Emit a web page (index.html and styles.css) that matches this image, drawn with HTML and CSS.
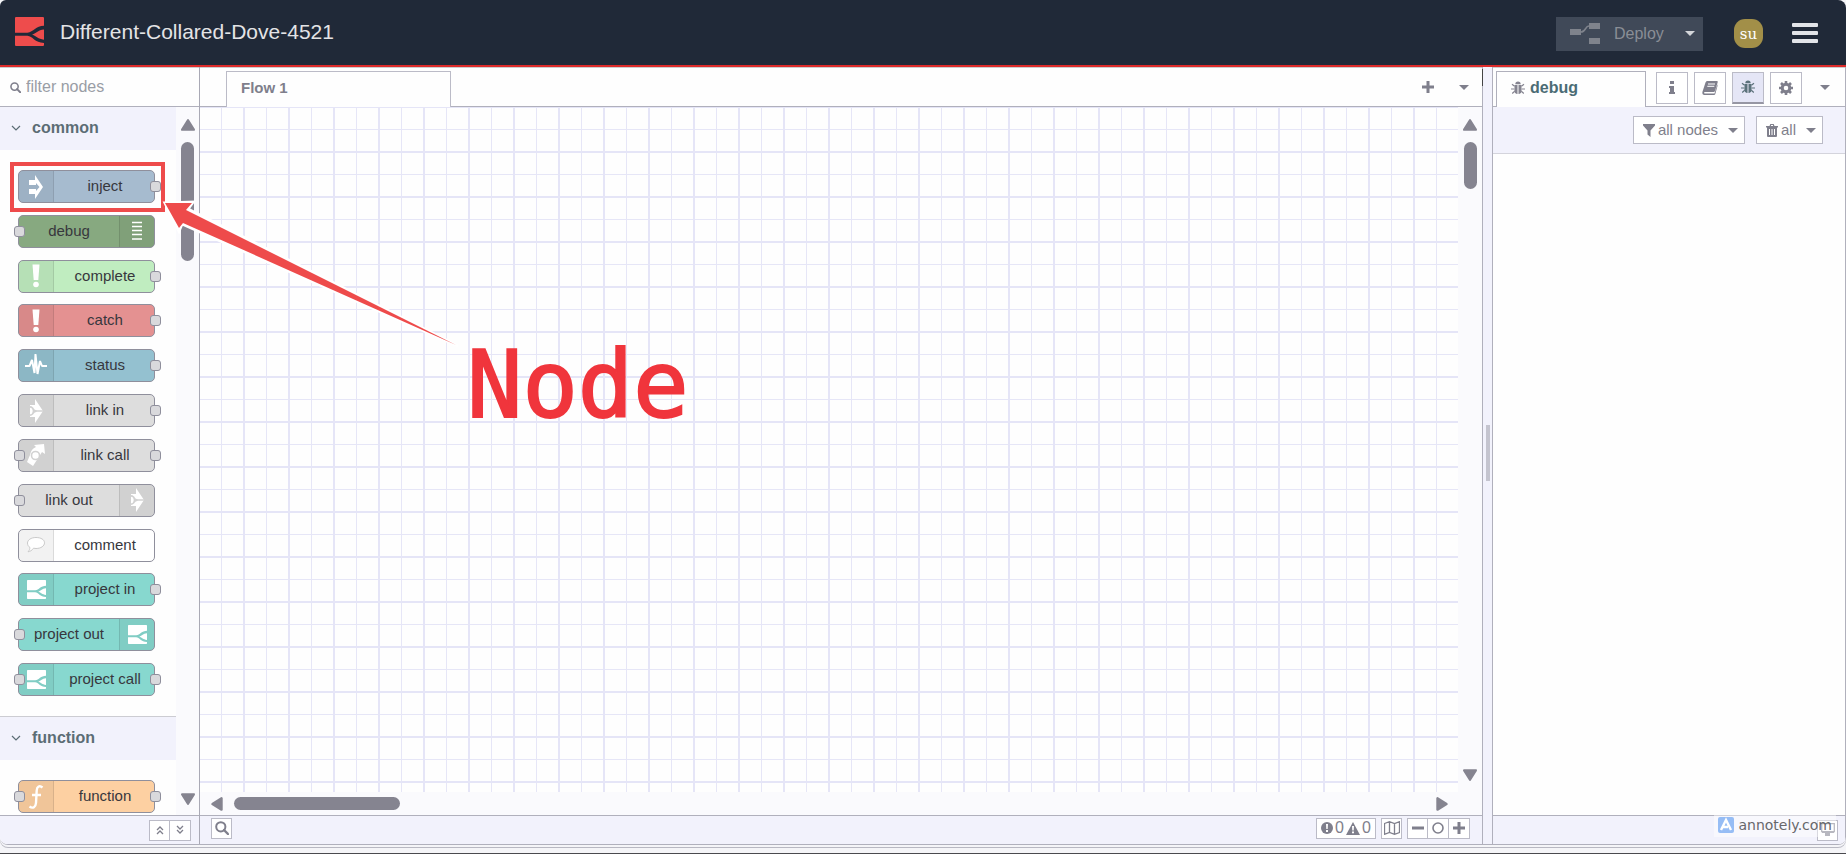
FILE: index.html
```html
<!DOCTYPE html>
<html lang="en">
<head>
<meta charset="utf-8">
<title>Different-Collared-Dove-4521</title>
<link rel="stylesheet" href="styles.css">
</head>
<body>
<svg class="defs" width="0" height="0" aria-hidden="true">
  <symbol id="logo" viewBox="0 0 28 28"><path d="M1 0H27Q28 0 28 1V8.500C20 8.500 18 14.500 12 15.200H0V1Q0 0 1 0ZM0 18.200H12C17 18.500 19 25 28 25V27Q28 28 27 28H1Q0 28 0 27ZM28 12V22C22 21.500 21 18.500 16.500 17C21 15.500 22 12.500 28 12Z"/></symbol>
  <symbol id="bug" viewBox="0 0 14 14"><path d="M4.300 3.200a2.700 2.700 0 0 1 5.400 0zM3.600 4h2.900v9C4.500 13 3.400 11.500 3.400 9.500zM7.500 4h2.900l.2 5.500c0 2-1.100 3.500-3.100 3.500z"/><path d="M1 3.200l2.600 2M0 8h3.300M1.200 12.500l2.500-2.200M13 3.200l-2.600 2M14 8h-3.300M12.800 12.500l-2.500-2.200" fill="none" stroke="currentColor" stroke-width="1.200"/></symbol>
  <symbol id="search" viewBox="0 0 14 14"><circle cx="5.800" cy="5.800" r="4.600" fill="none" stroke="currentColor" stroke-width="2"/><path d="M9 9l4 4" stroke="currentColor" stroke-width="2.400" stroke-linecap="round"/></symbol>
  <symbol id="inject" viewBox="0 0 16 26"><path d="M1 6h6V1L15 13 7 25V20H1v-5h7v2l3.500-4L8 9v2H1z"/></symbol>
  <symbol id="bang" viewBox="0 0 10 26"><path d="M1.500 1.500h7L7.300 17H2.700z"/><circle cx="5" cy="21.500" r="2.800"/></symbol>
  <symbol id="pulse" viewBox="0 0 22 26"><path d="M0 13h4.500l2.500-6 2.500 13L10.500 1l2 20 2.500-13L17 13h5" fill="none" stroke="currentColor" stroke-width="2" stroke-linejoin="bevel"/></symbol>
  <symbol id="link" viewBox="0 0 14 26"><path d="M1 7h5V1l8 12-8 12v-6H1z"/><path d="M0 9q2-.5 3.500 1Q5 13 8 13h6M8 13q-3 0-4.500 3Q2 17.500 0 17M3.500 10q2 3 0 6" fill="none" stroke="#d2d2d2" stroke-width="1.600"/></symbol>
  <symbol id="call" viewBox="0 0 20 24"><path d="M8 2l10-1 1 10-3-2-9 14-6-4 3-7q1-6 6-8z"/><circle cx="9.500" cy="12.500" r="4" fill="currentColor" stroke="#d2d2d2" stroke-width="1.600"/></symbol>
  <symbol id="bubble" viewBox="0 0 20 18"><path d="M10 1.500c5 0 8.500 2.200 8.500 5.300s-3.500 5.700-8.500 5.700l-2.500-.3C6 14.500 4 15.500 2 15.800c1.500-1.500 2-3 1.800-4.500C2.300 10.300 1.500 9 1.500 7c0-3 3.500-5.500 8.500-5.500z" fill="#fff" stroke="#cacaca"/></symbol>
  <symbol id="func" viewBox="0 0 16 26"><path d="M14.500 3.500c-3-2.500-5.500-1-5.800 3L8 19c-.3 4-3 6-6.500 3.500M4 11h9" fill="none" stroke="currentColor" stroke-width="2.400"/></symbol>
  <symbol id="list" viewBox="0 0 12 20"><path d="M1 1.500h10M1 5.500h10M1 9.500h10M1 13.500h10M1 18h10" stroke="currentColor" stroke-width="1.500"/></symbol>
</svg>

<header class="header">
  <svg class="logo"><use href="#logo"/></svg>
  <h1 class="title">Different-Collared-Dove-4521</h1>
  <button class="deploy">
    <svg class="deploy-icon" viewBox="0 0 30 22"><path d="M0 6h11v6H0zM19 0h11v6H19zM19 15h11v6H19z"/><path d="M11 9c5 0 4-6 8-6" fill="none" stroke="currentColor" stroke-width="1.500"/></svg>
    <span>Deploy</span><i class="caret"></i>
  </button>
  <button class="avatar">su</button>
  <button class="menu" aria-label="Menu"><i></i><i></i><i></i></button>
</header>

<main class="workspace">
  <aside class="palette">
    <label class="filter"><svg class="filter-icon"><use href="#search"/></svg><input type="text" placeholder="filter nodes" aria-label="filter nodes"></label>
    <div class="palette-body">
      <div class="palette-list">
        <h2 class="category"><svg viewBox="0 0 10 6"><path d="M1 1l4 4 4-4"/></svg>common</h2>
        <div class="nodes full">
          <div class="node inject"><span class="icon"><svg width="16" height="26"><use href="#inject"/></svg></span><span class="name">inject</span><i class="port out"></i></div>
          <div class="node right debug"><span class="icon"><svg width="12" height="20"><use href="#list"/></svg></span><span class="name">debug</span><i class="port in"></i></div>
          <div class="node complete"><span class="icon"><svg width="10" height="26"><use href="#bang"/></svg></span><span class="name">complete</span><i class="port out"></i></div>
          <div class="node catch"><span class="icon"><svg width="10" height="26"><use href="#bang"/></svg></span><span class="name">catch</span><i class="port out"></i></div>
          <div class="node status"><span class="icon"><svg width="22" height="26"><use href="#pulse"/></svg></span><span class="name">status</span><i class="port out"></i></div>
          <div class="node link"><span class="icon"><svg width="14" height="26"><use href="#link"/></svg></span><span class="name">link in</span><i class="port out"></i></div>
          <div class="node link"><span class="icon"><svg width="20" height="24"><use href="#call"/></svg></span><span class="name">link call</span><i class="port in"></i><i class="port out"></i></div>
          <div class="node right link"><span class="icon"><svg width="14" height="26"><use href="#link"/></svg></span><span class="name">link out</span><i class="port in"></i></div>
          <div class="node comment"><span class="icon"><svg width="20" height="18"><use href="#bubble"/></svg></span><span class="name">comment</span></div>
          <div class="node project"><span class="icon"><svg width="19" height="19"><use href="#logo"/></svg></span><span class="name">project in</span><i class="port out"></i></div>
          <div class="node right project"><span class="icon"><svg width="19" height="19"><use href="#logo"/></svg></span><span class="name">project out</span><i class="port in"></i></div>
          <div class="node project"><span class="icon"><svg width="19" height="19"><use href="#logo"/></svg></span><span class="name">project call</span><i class="port in"></i><i class="port out"></i></div>
        </div>
        <h2 class="category second"><svg viewBox="0 0 10 6"><path d="M1 1l4 4 4-4"/></svg>function</h2>
        <div class="nodes">
          <div class="node function"><span class="icon"><svg width="16" height="26"><use href="#func"/></svg></span><span class="name">function</span><i class="port in"></i><i class="port out"></i></div>
        </div>
      </div>
      <div class="vbar"><svg class="arrow" viewBox="0 0 14 12"><path d="M7 2l5 8H2z"/></svg><i class="thumb palette-thumb"></i><svg class="arrow end" viewBox="0 0 14 12"><path d="M7 10l5-8H2z"/></svg></div>
    </div>
    <footer class="footer palette-footer">
      <button class="tool" aria-label="Collapse all"><svg width="10" height="12" viewBox="0 0 10 12"><path d="M2 6l3-3 3 3M2 10l3-3 3 3"/></svg></button><button class="tool" aria-label="Expand all"><svg width="10" height="12" viewBox="0 0 10 12"><path d="M2 2l3 3 3-3M2 6l3 3 3-3"/></svg></button>
    </footer>
  </aside>

  <section class="editor">
    <nav class="tabs">
      <button class="tab">Flow 1</button>
      <button class="plain add" aria-label="Add flow"><svg width="14" height="14" viewBox="0 0 14 14"><path d="M7 1v12M1 7h12"/></svg></button>
      <button class="plain" aria-label="List flows"><i class="caret"></i></button>
    </nav>
    <div class="canvas">
      <div class="grid"></div>
      <div class="vbar"><svg class="arrow" viewBox="0 0 14 12"><path d="M7 2l5 8H2z"/></svg><i class="thumb canvas-thumb"></i><svg class="arrow end" viewBox="0 0 14 12"><path d="M7 10l5-8H2z"/></svg></div>
      <div class="hbar"><svg class="harrow" viewBox="0 0 12 14"><path d="M2 7l8-5v10z"/></svg><i class="hthumb"></i><svg class="harrow end" viewBox="0 0 12 14"><path d="M10 7L2 2v10z"/></svg></div>
    </div>
    <footer class="footer editor-footer">
      <button class="tool" aria-label="Search"><svg width="14" height="14"><use href="#search"/></svg></button>
      <button class="counts"><svg width="12" height="12" viewBox="0 0 12 12"><circle cx="6" cy="6" r="6"/><path d="M5 2h2l-.3 5H5.300zM5 8h2v2H5z" fill="#fff"/></svg>0<svg width="14" height="13" viewBox="0 0 14 13"><path d="M7 0l7 13H0z"/><path d="M6 4h2l-.3 4.500H6.300zM6 9.500h2v1.800H6z" fill="#fff"/></svg>0</button>
      <button class="tool" aria-label="Toggle navigator"><svg width="16" height="14" viewBox="0 0 16 14"><path class="thin" d="M.5 2.500L5.500.700l5 1.800 5-1.800v10.800l-5 1.800-5-1.800-5 1.800zM5.500.700v10.800M10.500 2.500v10.800"/></svg></button>
      <div class="zoom"><button class="tool" aria-label="Zoom out"><svg width="12" height="12" viewBox="0 0 12 12"><path class="thick" d="M0 6h12"/></svg></button><button class="tool" aria-label="Reset zoom"><svg width="12" height="12" viewBox="0 0 12 12"><circle cx="6" cy="6" r="5" fill="none" stroke="currentColor" stroke-width="1.600"/></svg></button><button class="tool" aria-label="Zoom in"><svg width="12" height="12" viewBox="0 0 12 12"><path class="thick" d="M0 6h12M6 0v12"/></svg></button></div>
    </footer>
  </section>

  <div class="separator"><i></i></div>

  <aside class="sidebar">
    <nav class="side-tabs">
      <button class="side-tab"><svg width="14" height="14"><use href="#bug"/></svg>debug</button>
      <button class="box" aria-label="Information"><svg width="8" height="14" viewBox="0 0 8 14"><path d="M2 0h4v3H2zM1 5h5v6h1v2H1v-2h1V7H1z"/></svg></button>
      <button class="box" aria-label="Help"><svg width="16" height="14" viewBox="0 0 16 14"><path d="M5 0h10q1 0 .7 1.200L13 10q-.3 1-1.300 1H3q-1 0-1 .8t1 .7h9.500L15.500 3v2L13.300 13q-.3 1-1.300 1H2.500Q0 14 .4 11L3.500 1.500Q4 0 5 0z"/><path d="M6 3h7M5.300 5.300h7" stroke="#fff"/></svg></button>
      <button class="box active" aria-label="Debug messages"><svg width="14" height="14"><use href="#bug"/></svg></button>
      <button class="box" aria-label="Configuration"><svg width="14" height="14" viewBox="0 0 14 14"><circle cx="7" cy="7" r="3.800" fill="none" stroke="currentColor" stroke-width="3"/><path d="M7 0v3M7 11v3M0 7h3M11 7h3M2 2l2 2M10 10l2 2M12 2l-2 2M4 10l-2 2" stroke="currentColor" stroke-width="2.600"/></svg></button>
      <button class="plain" aria-label="More"><i class="caret"></i></button>
    </nav>
    <div class="debug-bar">
      <button class="select"><svg width="12" height="13" viewBox="0 0 12 13"><path d="M0 0h12v1.500L7.500 6.500V13l-3-2.500v-4L0 1.500z"/></svg>all nodes<i class="caret"></i></button>
      <button class="select"><svg width="12" height="13" viewBox="0 0 12 13"><path d="M0 2h3.500L4.300 0h3.400l.8 2H12v1.500h-1V12q0 1-1 1H2q-1 0-1-1V3.500H0z"/><path d="M3.500 5v6M6 5v6M8.500 5v6M5 1.500h2" stroke="#fff"/></svg>all<i class="caret"></i></button>
    </div>
    <div class="messages"></div>
    <footer class="footer side-footer"><button class="tool" aria-label="Open in new window"><svg width="14" height="14" viewBox="0 0 14 14"><path d="M.7.700h12.600v8H.700z" fill="none" stroke="currentColor" stroke-width="1.400"/><path d="M1 8h12v2H9v3H4v-3H1z"/></svg></button></footer>
  </aside>
</main>

<div class="annotations">
  <div class="highlight"></div>
  <svg class="pointer" width="294" height="144" viewBox="0 0 294 144"><path d="M1 1L29 0 24 7 294 144 18 22 15 29z" fill="#fff" stroke="#fff" stroke-width="3"/><path d="M1 1L28 1 22 8 292 143 19 21 15 26z" fill="#ee4b4b"/></svg>
  <div class="callout">Node</div>
  <div class="watermark"><svg width="16" height="16" viewBox="0 0 16 16"><rect width="16" height="16" rx="2" fill="#96bdf5"/><path d="M3 13L8 3l5 10M5 10h5" fill="none" stroke="#fff" stroke-width="2.400"/></svg>annotely.com</div>
</div>
</body>
</html>
```
FILE: styles.css
```css
* { box-sizing: border-box; }
html, body { height: 100%; }
body {
  margin: 0;
  padding-bottom: 9px;
  display: flex;
  flex-direction: column;
  position: relative;
  overflow: hidden;
  background: linear-gradient(#4a4a4e, #4a4a4e) bottom / 100% 1px no-repeat, #f5f5f8;
  font: 15px/20px "Liberation Sans", Arial, sans-serif;
  color: #7f7f8c;
}
button, input { font: inherit; color: inherit; padding: 0; margin: 0; border: 0; background: none; }
svg { fill: currentColor; flex: none; }
.defs { position: absolute; }
h1, h2 { margin: 0; font-size: inherit; }

.header {
  flex: none;
  height: 67px;
  display: flex;
  align-items: center;
  padding: 2px 28px 0 15px;
  background: #202938;
  border-bottom: 2px solid #dd2a2a;
  border-radius: 6px 8px 0 0;
}
.logo { width: 29px; height: 29px; margin-bottom: 4px; color: #ee4c4c; }
.title { margin: 0 auto 4px 16px; font-size: 21px; font-weight: 400; color: #e4e4e6; }
.deploy {
  display: flex;
  align-items: center;
  width: 147px;
  height: 34px;
  padding: 0 8px 0 14px;
  background: #404958;
  color: #8a8e96;
  font-size: 16px;
}
.deploy-icon { width: 30px; height: 22px; color: #7f838c; margin-right: 14px; }
.caret { width: 0; height: 0; border: 5px solid transparent; border-top-color: currentColor; border-bottom: 0; display: block; }
.deploy .caret { margin-left: auto; color: #d4d6da; }
.avatar { width: 29px; height: 29px; margin: 0 29px 0 31px; border-radius: 11px; background: #a28f48; color: #fff; font: 15px/24px "DejaVu Serif", serif; }
.menu { display: grid; gap: 4px; width: 26px; margin-bottom: 2px; }
.menu i { height: 4px; border-radius: 1px; background: #e2e4e8; }

.workspace { flex: 1; min-height: 0; display: flex; background: #f2f2fc; border-bottom: 1px solid #b0b0bc; border-radius: 0 0 8px 8px; overflow: hidden; box-shadow: 0 2px #f5f5f8, 0 3px #b8b8c2; }
.palette { width: 200px; flex: none; display: flex; flex-direction: column; border-right: 1px solid #a9a9b5; background: #fefefe; }
.filter { height: 40px; flex: none; display: flex; align-items: center; gap: 5px; padding-left: 10px; border-top: 1px solid #ccc; border-bottom: 1px solid #b0b0bc; }
.filter-icon { width: 11px; height: 11px; }
.filter input { width: 140px; outline: 0; font-size: 16px; }
.filter input::placeholder { color: #999da5; opacity: 1; }
.palette-body { flex: 1; min-height: 0; display: flex; }
.palette-list { flex: 1; overflow: hidden; }
.category { height: 43px; display: flex; align-items: center; gap: 11px; padding: 0 0 2px 11px; background: #f2f2fc; color: #5c6d75; font-size: 16px; }
.category svg { width: 10px; height: 6px; fill: none; stroke: currentColor; stroke-width: 1.200; }
.category.second { height: 44px; border-top: 1px solid #ccccd2; }
.nodes { display: grid; gap: 11px; padding: 20px 0 20px 18px; }
.nodes.full { height: 566px; align-content: space-between; }
.node { --fill: #ddd; width: 137px; height: 33px; position: relative; display: flex; border: 1px solid #8f8f9c; border-radius: 5px; background: var(--fill); color: #37373d; }
.node .icon { width: 35px; display: grid; place-items: center; background: rgba(0, 0, 0, .05); border-right: 1px solid rgba(0, 0, 0, .1); color: #fff; border-radius: 4px 0 0 4px; }
.node .name { flex: 1; padding-left: 2px; text-align: center; line-height: 30px; }
.node.right { flex-direction: row-reverse; }
.node.right .name { padding-left: 0; }
.node.right .icon { border-right: 0; border-left: 1px solid rgba(0, 0, 0, .1); border-radius: 0 4px 4px 0; }
.port { position: absolute; top: 10px; width: 11px; height: 11px; border: 1px solid #8f8f9c; border-radius: 3px; background: #d9d9dc; }
.port.in { left: -5px; }
.port.out { right: -7px; }
.inject { --fill: #a6bbcf; }
.debug { --fill: #87a980; }
.complete { --fill: #c0edc0; }
.catch { --fill: #e49191; }
.status { --fill: #94c1d0; }
.comment { --fill: #fff; }
.project { --fill: #87d8cf; }
.function { --fill: #fdd0a2; }

.vbar { width: 23px; flex: none; display: flex; flex-direction: column; align-items: center; padding: 11px 0 9px; background: #fafafd; color: #858490; }
.arrow { width: 18px; height: 14px; stroke: currentColor; stroke-width: 2; stroke-linejoin: round; }
.thumb { width: 13px; border-radius: 7px; background: #858490; margin-top: 10px; }
.palette-thumb { height: 119px; }
.canvas-thumb { height: 47px; }
.end { margin-top: auto; }
.footer { height: 29px; flex: none; display: flex; align-items: center; background: #f2f2fc; border-top: 1px solid #b0b0bc; }
.tool { width: 21px; height: 21px; display: grid; place-items: center; border: 1px solid #bbbbc7; background: #fff; }
.tool + .tool { border-left: 0; }
.tool svg:not(:has(use)) path { stroke-width: 1.300; }
.palette-footer { justify-content: flex-end; padding-right: 8px; }
.palette-footer svg { fill: none; stroke: currentColor; }

.editor { flex: 1; min-width: 0; display: flex; flex-direction: column; position: relative; border-right: 1px solid #b0b0bc; }
.editor::after { content: ""; position: absolute; top: 2px; right: -1px; width: 1px; height: 17px; background: #444; }
.tabs { height: 40px; flex: none; display: flex; align-items: center; padding: 3px 11px 0 26px; background: linear-gradient(#b0b0bc, #b0b0bc) bottom / 100% 1px no-repeat, #fefefe; border-top: 1px solid #ccc; }
.tab { width: 225px; height: 36px; margin-right: auto; padding: 0 0 4px 14px; text-align: left; font-weight: 700; border: 1px solid #bbbbc7; border-bottom: 0; background: #fefefe; }
.tabs .tab { align-self: flex-end; }
.plain { width: 14px; height: 20px; margin-bottom: 4px; display: grid; place-items: center; }
.add { margin-right: 22px; }
.add svg { stroke: currentColor; stroke-width: 3; }
.canvas { flex: 1; min-height: 0; display: grid; grid-template: 1fr 23px / 1fr 24px; background: #fafafd; }
.grid {
  background-color: #fefefe;
  background-image:
    linear-gradient(90deg, transparent 43px, #e5e5f7 43px),
    linear-gradient(transparent 43px, #e5e5f7 43px),
    linear-gradient(90deg, transparent 21px, #e6e6f7 21px, #e6e6f7 22px, transparent 22px),
    linear-gradient(transparent 21px, #e6e6f7 21px, #e6e6f7 22px, transparent 22px);
  background-size: 45px 45px;
  background-position: 0 0, 0 1px, 0 0, 0 1px;
}
.canvas .vbar { width: auto; padding-bottom: 10px; }
.hbar { display: flex; align-items: center; padding: 0 9px 0 10px; color: #858490; }
.harrow { width: 14px; height: 16px; stroke: currentColor; stroke-width: 2; stroke-linejoin: round; }
.harrow.end { margin: 0 0 0 auto; }
.hthumb { width: 166px; height: 13px; margin-left: 10px; border-radius: 7px; background: #858490; }
.editor-footer { padding: 0 12px 4px 11px; gap: 5px; }
.counts { width: 60px; height: 21px; margin-left: auto; display: flex; align-items: center; justify-content: center; gap: 2px; font-size: 16px; border: 1px solid #bbbbc7; background: #fff; }
.editor-footer .tool { flex: none; }
.zoom { display: flex; }
.thin { fill: none; stroke: currentColor; }
.tool svg:not(:has(use)) path.thick { stroke: currentColor; stroke-width: 3; }

.separator { width: 9px; flex: none; display: grid; place-items: center; padding-bottom: 6px; }
.separator i { width: 4px; height: 56px; background: #c4c4cf; }
.sidebar { width: 354px; flex: none; display: flex; flex-direction: column; border: solid #b0b0bc; border-width: 0 1px; background: #fefefe; }
.side-tabs { height: 40px; flex: none; display: flex; align-items: center; gap: 6px; padding: 0 13px 0 3px; border-top: 1px solid #ccc; background: linear-gradient(#b0b0bc, #b0b0bc) bottom / 100% 1px no-repeat; }
.side-tab { align-self: flex-end; width: 150px; height: 36px; margin-right: auto; padding: 0 0 4px 14px; display: flex; align-items: center; gap: 5px; font-size: 16px; font-weight: 700; color: #4b6c75; border: 1px solid #b0b0bc; border-bottom: 0; background: #fefefe; }
.side-tab svg { color: #858490; }
.box { width: 32px; height: 32px; display: grid; place-items: center; border: 1px solid #bbbbc7; background: #fff; }
.active { background: #e5e6f6; color: #5c727b; border-bottom: 2px solid #9696a3; }
.side-tabs .plain { margin: 0 0 0 10px; }
.debug-bar { height: 47px; flex: none; display: flex; align-items: center; justify-content: flex-end; gap: 11px; padding-right: 22px; background: #f2f2fc; border-bottom: 1px solid #d4d4dc; }
.select { height: 28px; display: flex; align-items: center; gap: 3px; padding: 0 6px 0 9px; border: 1px solid #bbbbc7; background: #fff; }
.select .caret { margin-left: 7px; }
.messages { flex: 1; }
.side-footer { justify-content: flex-end; padding-right: 7px; }

.annotations { position: absolute; inset: 0; pointer-events: none; }
.highlight { position: absolute; left: 10px; top: 162px; width: 155px; height: 50px; border: 4px solid #ee4b4b; }
.pointer { position: absolute; left: 164px; top: 202px; overflow: visible; }
.callout { position: absolute; left: 467px; top: 332px; font: 92px/108px "DejaVu Sans Mono", monospace; color: #f0353c; -webkit-text-stroke: 2px #f0353c; }
.watermark { position: absolute; right: 10px; bottom: 17px; display: flex; align-items: center; gap: 4px; padding: 0 4px; background: rgba(255, 255, 255, .45); color: #67676b; font: 14px/24px "DejaVu Sans", sans-serif; }
```
